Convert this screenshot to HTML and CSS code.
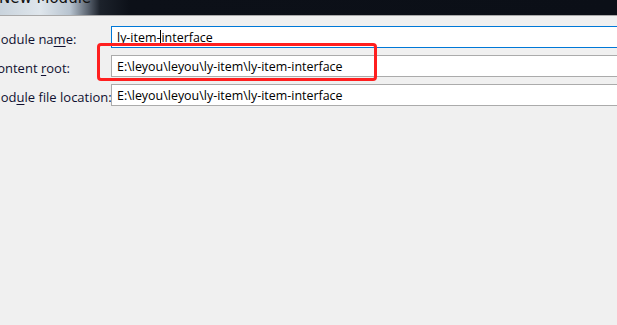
FILE: index.html
```html
<!DOCTYPE html>
<html>
<head>
<meta charset="utf-8">
<link rel="stylesheet" href="styles.css">
</head>
<body>
<div class="titlebar"><span class="title">New Module</span></div>
<div class="form">
  <div class="row">
    <label class="label">Module na<u>m</u>e:</label>
    <div class="field focused"><span class="val">ly-item-</span><span class="caret"></span><span class="val">interface</span></div>
  </div>
  <div class="row">
    <label class="label">Content <u>r</u>oot:</label>
    <div class="field"><span class="val">E:\leyou\leyou\ly-item\ly-item-interface</span></div>
  </div>
  <div class="row">
    <label class="label">Mod<u>u</u>le file location:</label>
    <div class="field"><span class="val">E:\leyou\leyou\ly-item\ly-item-interface</span></div>
  </div>
  <div class="highlight"></div>
</div>
</body>
</html>
```
FILE: styles.css
```css
html, body {
  margin: 0;
  padding: 0;
  background: #f0f0f0;
  overflow: hidden;
  width: 617px;
  height: 325px;
}
body {
  font-family: "Open Sans", "Noto Sans CJK SC", sans-serif;
  font-size: 12.45px;
  color: #000;
}
.titlebar {
  height: 15px;
  background: linear-gradient(90deg, #c9d3dc 0px, #dfe6ec 40px, #b7c3cf 70px, #5b6470 88px, #1c222b 100px, #0c1018 130px, #0b0f17 100%);
  border-bottom: 1px solid #a9a9a9;
  overflow: hidden;
  position: relative;
}
.title {
  display: block;
  margin-top: -11px;
  margin-left: -1px;
  font-family: "DejaVu Sans", sans-serif;
  font-size: 15px;
  line-height: 18px;
  color: #111;
}
.form {
  position: relative;
  display: flex;
  flex-direction: column;
  gap: 7px;
  padding-top: 10px;
}
.row {
  display: flex;
  align-items: center;
  height: 22px;
}
.label {
  width: 122px;
  margin-left: -11px;
  flex-shrink: 0;
  color: #101030;
  padding-top: 4px;
  white-space: nowrap;
  font-size: 13px;
}
.label u {
  text-underline-offset: 2px;
}
.field {
  flex-shrink: 0;
  box-sizing: border-box;
  width: 600px;
  height: 22px;
  background: #fff;
  border: 1px solid #ababab;
  border-right: none;
  display: flex;
  align-items: center;
  padding-left: 5px;
  white-space: nowrap;
}
.field.focused {
  border-color: #0078d7;
}
.caret {
  display: inline-block;
  width: 1px;
  height: 14px;
  background: #000;
}
.highlight {
  position: absolute;
  left: 97px;
  top: 27px;
  width: 274px;
  height: 32px;
  border: 3px solid #ff1f1f;
  border-radius: 4px;
}
```
